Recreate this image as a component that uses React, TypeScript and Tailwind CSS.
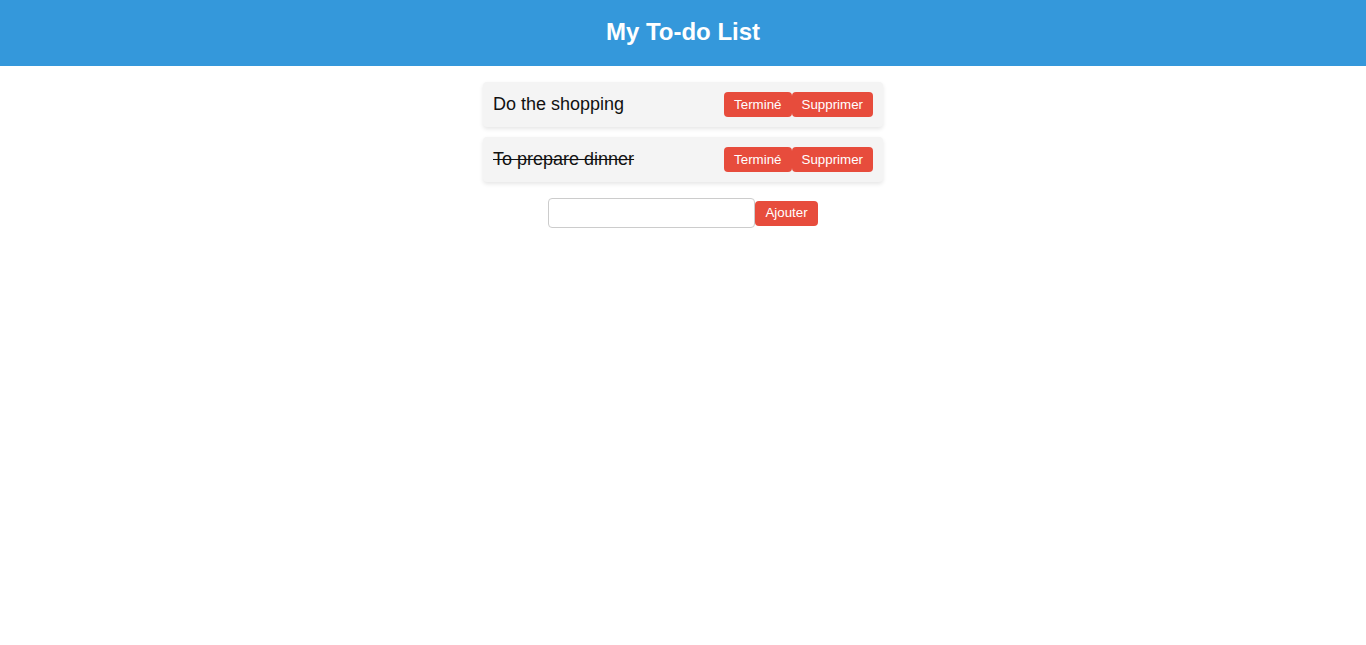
import React from "react";

const items = [
  { text: "Do the shopping", done: false },
  { text: "To prepare dinner", done: true },
];

export default function App() {
  return (
    <div className="min-h-screen bg-white" style={{ fontFamily: '"Liberation Sans", Arial, sans-serif' }}>
      <header className="h-[66px] bg-[#3498db] flex items-center justify-center">
        <h1 className="text-white text-[24px] font-bold leading-none pb-[2px]">My To-do List</h1>
      </header>
      <div className="flex flex-col items-center pt-4">
        <ul className="w-[400px] flex flex-col gap-[10px]">
          {items.map((it) => (
            <li
              key={it.text}
              className="h-[45px] bg-[#f4f4f4] rounded-[4px] shadow-[0_2px_4px_rgba(0,0,0,0.1)] flex items-center justify-between px-[10px]"
            >
              <span className={"text-[18px] text-[#111] " + (it.done ? "line-through" : "")}>{it.text}</span>
              <div className="flex">
                <button className="h-[25px] px-[10px] bg-[#e74c3c] text-white text-[13.333px] font-medium rounded-[4px]">Terminé</button>
                <button className="h-[25px] px-[10px] bg-[#e74c3c] text-white text-[13.333px] font-medium rounded-[4px]">Supprimer</button>
              </div>
            </li>
          ))}
        </ul>
        <div className="flex items-center mt-4">
          <input className="w-[207px] h-[30px] border border-[#ccc] rounded-[4px] px-2 outline-none" />
          <button className="h-[25px] px-[10px] bg-[#e74c3c] text-white text-[13.333px] font-medium rounded-[4px]">Ajouter</button>
        </div>
      </div>
    </div>
  );
}
